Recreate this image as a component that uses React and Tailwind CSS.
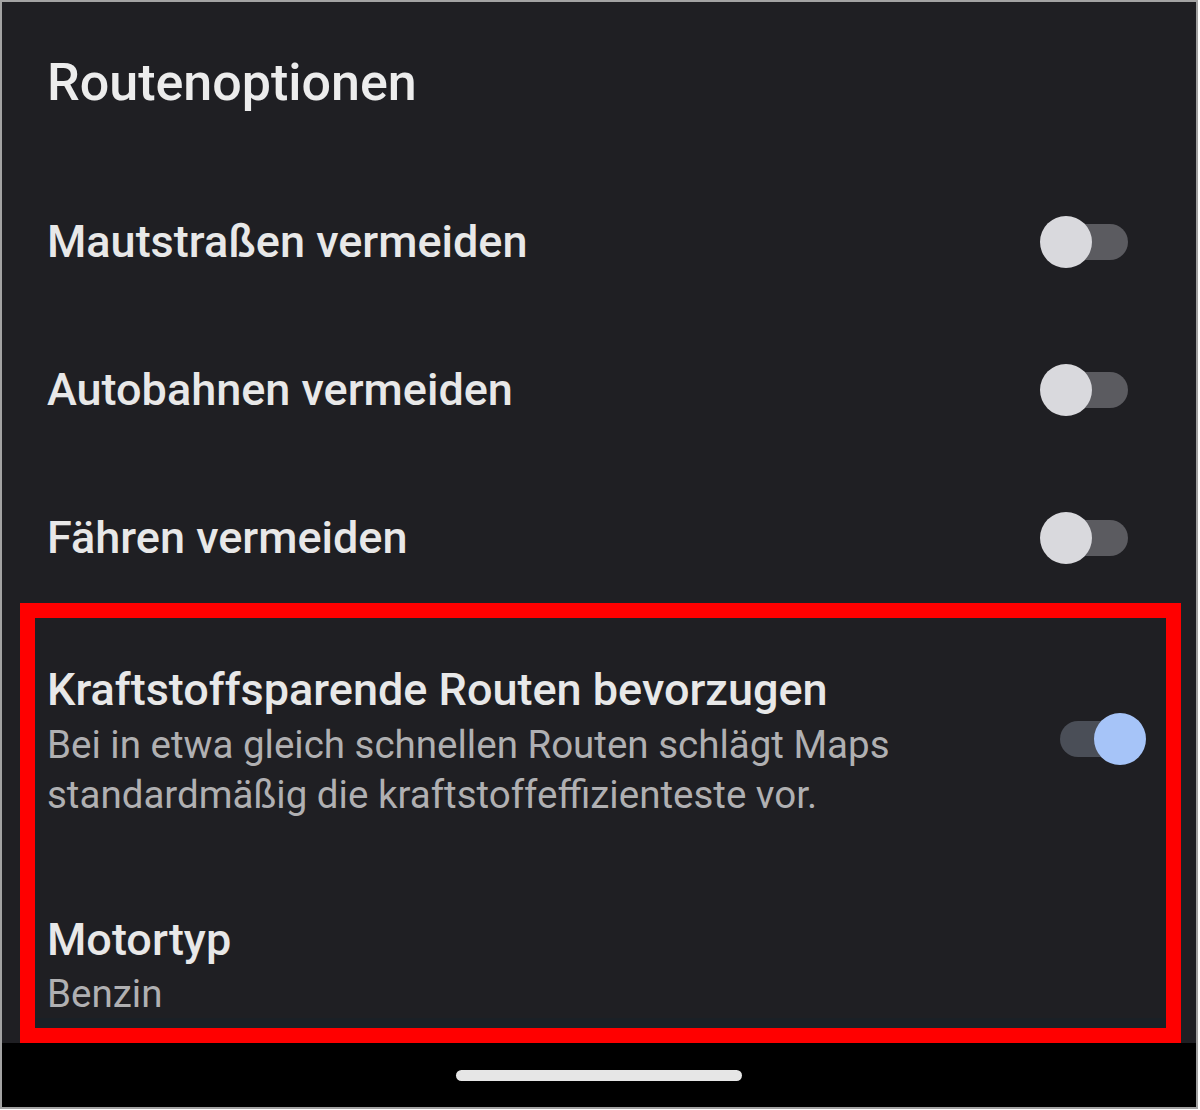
import React, { useState } from "react";

const rows = [
  { label: "Mautstraßen vermeiden", on: false },
  { label: "Autobahnen vermeiden", on: false },
  { label: "Fähren vermeiden", on: false },
];

const Toggle = ({ on, onClick }) => {
  if (on) {
    return (
      <button onClick={onClick} className="relative flex h-[54px] w-[88px] items-center">
        <div className="ml-[2px] h-[36px] w-[80px] rounded-full bg-[#4a4e57]" />
        <div className="absolute right-0 top-[1px] h-[52px] w-[52px] rounded-full bg-[#a6c4f8]" />
      </button>
    );
  }
  return (
    <button onClick={onClick} className="relative flex h-[54px] w-[88px] items-center">
      <div className="ml-[6px] h-[36px] w-[82px] rounded-full bg-[#5b5b60]" />
      <div className="absolute left-0 top-[1px] h-[52px] w-[52px] rounded-full bg-[#d9d9dd]" />
    </button>
  );
};

const App = () => {
  const [toggles, setToggles] = useState(rows.map((r) => r.on));
  const [fuel, setFuel] = useState(true);

  return (
    <div className="h-[1110px] w-[1200px] bg-white font-['Roboto',sans-serif]">
      <div className="flex h-[1109px] w-[1198px] flex-col border-2 border-[#a3a3a3] bg-black">
        <div className="flex h-[1041px] flex-col bg-[#1f1f23]">
          <h1 className="ml-[45px] mt-[51px] text-[52px] font-medium leading-[60px] text-[#ececec]">
            Routenoptionen
          </h1>

          <div className="mt-[64px] flex flex-col gap-[18px]">
            {rows.map((row, i) => (
              <div key={row.label} className="flex h-[130px] items-center justify-between pl-[45px] pr-[68px]">
                <p className="text-[45px] font-medium text-[#e8e8e8]">{row.label}</p>
                <Toggle
                  on={toggles[i]}
                  onClick={() => setToggles(toggles.map((t, j) => (j === i ? !t : t)))}
                />
              </div>
            ))}
          </div>

          <div className="mt-auto pl-[18px] pr-[15px]">
            <div className="flex h-[440px] flex-col overflow-hidden border-[15px] border-[#ff0000]">
              <div className="flex flex-1 flex-col overflow-hidden">
                <div className="flex items-start justify-between pl-[12px] pr-[20px] pt-[44px]">
                  <div>
                    <p className="text-[45px] font-medium leading-[56px] text-[#e8e8e8]">
                      Kraftstoffsparende Routen bevorzugen
                    </p>
                    <p className="mt-[2px] text-[38.5px] leading-[50px] text-[#b0b0b2]">
                      Bei in etwa gleich schnellen Routen schlägt Maps
                      <br />
                      standardmäßig die kraftstoffeffizienteste vor.
                    </p>
                  </div>
                  <div className="mt-[50px]">
                    <Toggle on={fuel} onClick={() => setFuel(!fuel)} />
                  </div>
                </div>
                <div className="pl-[12px] pt-[92px]">
                  <p className="text-[45px] font-medium leading-[56px] text-[#e8e8e8]">Motortyp</p>
                  <p className="mt-[4px] text-[38.5px] leading-[44px] text-[#b0b0b2]">Benzin</p>
                </div>
              </div>
              <div className="h-[10px] shrink-0 bg-[#1a2026]" />
            </div>
          </div>
        </div>

        <div className="flex flex-1 items-center justify-center">
          <div className="h-[11px] w-[286px] rounded-full bg-[#e6e6e6]" />
        </div>
      </div>
    </div>
  );
};

export default App;
